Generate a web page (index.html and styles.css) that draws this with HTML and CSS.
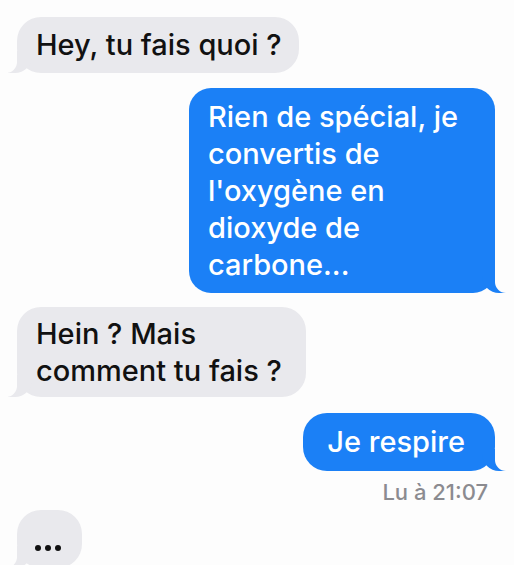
FILE: index.html
```html
<!DOCTYPE html>
<html lang="fr">
<head>
<meta charset="utf-8">
<link rel="stylesheet" href="styles.css">
</head>
<body>
<div class="chat">
  <div class="bubble them b1">Hey, tu fais quoi ?</div>
  <div class="bubble me b2">Rien de spécial, je convertis de l'oxygène en dioxyde de carbone...</div>
  <div class="bubble them b3">Hein ? Mais<br>comment tu fais ?</div>
  <div class="bubble me b4">Je respire</div>
  <div class="read">Lu à 21:07</div>
  <div class="bubble them typing"><span class="dot"></span><span class="dot"></span><span class="dot"></span></div>
</div>
</body>
</html>
```

FILE: styles.css
```css
html, body {
  margin: 0;
  padding: 0;
  background: #fdfdfd;
  overflow: hidden;
}
.chat {
  display: flex;
  flex-direction: column;
  padding: 17px 19px 0 17px;
  font-family: Inter, "Liberation Sans", Arial, sans-serif;
  font-weight: 500;
  font-size: 29px;
  line-height: 37px;
}
.bubble {
  position: relative;
  border-radius: 24px;
  padding: 9px 17px 10px 19px;
  letter-spacing: 0;
}
.them {
  align-self: flex-start;
  background: #e9e9ed;
  color: #111;
}
.me {
  align-self: flex-end;
  background: #1b80f6;
  color: #fff;
}
.them::before, .them::after, .me::before, .me::after {
  content: "";
  position: absolute;
  bottom: 0;
  height: 22px;
}
.them::before {
  left: -9px;
  width: 24px;
  background: #e9e9ed;
  border-bottom-right-radius: 17px;
}
.them::after {
  left: -26px;
  width: 26px;
  background: #fdfdfd;
  border-bottom-right-radius: 11px;
}
.me::before {
  right: -11px;
  width: 24px;
  background: #1b80f6;
  border-bottom-left-radius: 17px;
}
.me::after {
  right: -26px;
  width: 26px;
  background: #fdfdfd;
  border-bottom-left-radius: 11px;
}
.b2 {
  margin-top: 15px;
  width: 267px;
  padding: 10px 20px 10px 19px;
  border-radius: 22px;
}
.b3 {
  margin-top: 14px;
  padding: 8px 24px 8px 19px;
}
.b4 {
  margin-top: 16px;
  padding: 10px 30px 11px 24px;
}
.read {
  align-self: flex-end;
  margin-top: 9px;
  margin-right: 7px;
  font-size: 22px;
  line-height: 25px;
  color: #8b8b90;
}
.typing {
  margin-top: 5px;
  width: 65px;
  height: 58px;
  box-sizing: border-box;
  display: flex;
  align-items: flex-end;
  justify-content: center;
  gap: 4px;
  padding: 0 4px 17px 0;
}
.dot {
  width: 6px;
  height: 6px;
  border-radius: 50%;
  background: #111;
}
```
